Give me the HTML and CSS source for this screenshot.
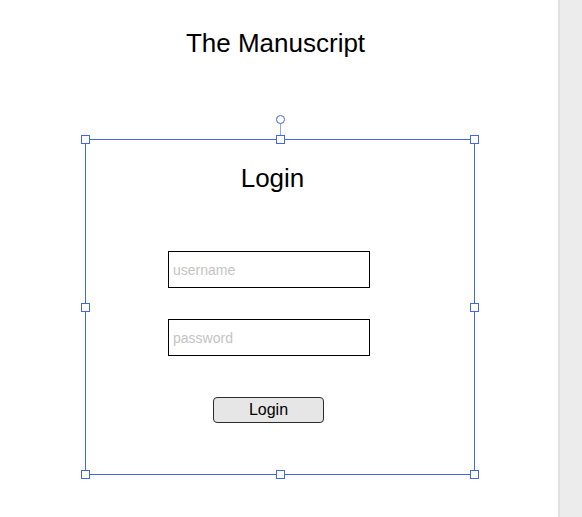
FILE: index.html
```html
<!DOCTYPE html>
<html lang="en">
<head>
<meta charset="utf-8">
<title>The Manuscript</title>
<link rel="stylesheet" href="styles.css">
</head>
<body>
<div class="page">
  <main class="canvas">
    <h1 class="title">The Manuscript</h1>
    <div class="frame">
      <span class="rotate-line"></span>
      <span class="rotate-knob"></span>
      <span class="handle h-tl"></span>
      <span class="handle h-tm"></span>
      <span class="handle h-tr"></span>
      <span class="handle h-ml"></span>
      <span class="handle h-mr"></span>
      <span class="handle h-bl"></span>
      <span class="handle h-bm"></span>
      <span class="handle h-br"></span>
      <form class="login" onsubmit="return false">
        <h2 class="login-title">Login</h2>
        <input class="field field-user" type="text" placeholder="username">
        <input class="field field-pass" type="password" placeholder="password">
        <button class="login-btn" type="button">Login</button>
      </form>
    </div>
  </main>
  <aside class="side"></aside>
</div>
</body>
</html>
```

FILE: styles.css
```css
html, body {
  margin: 0;
  padding: 0;
  background: #ffffff;
}

body {
  font-family: "Liberation Sans", Arial, sans-serif;
  color: #000;
}

.page {
  display: flex;
  width: 582px;
  height: 517px;
  overflow: hidden;
}

.canvas {
  flex: 1;
  display: flex;
  flex-direction: column;
  padding-top: 28px;
}

.title {
  margin: 0;
  font-size: 26px;
  font-weight: normal;
  line-height: 30px;
  text-align: center;
  padding-right: 7px;
}

.frame {
  position: relative;
  box-sizing: border-box;
  margin: 81px 0 0 85px;
  width: 390px;
  height: 336px;
  border: 1px solid #4169e1;
}

.handle {
  position: absolute;
  box-sizing: border-box;
  width: 9px;
  height: 9px;
  background: #fff;
  border: 1px solid #4169e1;
}

.h-tl { left: -5px; top: -5px; }
.h-tm { left: 50%; margin-left: -4px; top: -5px; }
.h-tr { right: -5px; top: -5px; }
.h-ml { left: -5px; top: 50%; margin-top: -4px; }
.h-mr { right: -5px; top: 50%; margin-top: -4px; }
.h-bl { left: -5px; bottom: -5px; }
.h-bm { left: 50%; margin-left: -4px; bottom: -5px; }
.h-br { right: -5px; bottom: -5px; }

.rotate-knob {
  position: absolute;
  box-sizing: border-box;
  width: 9px;
  height: 9px;
  left: 50%;
  margin-left: -4px;
  top: -25px;
  border: 1px solid #4169e1;
  border-radius: 50%;
  background: #fff;
}

.rotate-line {
  position: absolute;
  width: 1px;
  left: 50%;
  margin-left: 0;
  top: -17px;
  height: 12px;
  background: #8ea6ec;
}

.login {
  display: flex;
  flex-direction: column;
  align-items: center;
  padding: 23px 22px 0 0;
  margin: 0;
}

.login-title {
  margin: 0 0 58px;
  font-size: 26px;
  font-weight: normal;
  line-height: 30px;
  padding-left: 7px;
}

.field {
  box-sizing: border-box;
  width: 202px;
  height: 37px;
  margin: 0;
  padding: 0 4px;
  border: 1px solid #000;
  border-radius: 0;
  background: #fff;
  font-family: "Liberation Sans", Arial, sans-serif;
  font-size: 14px;
  color: #000;
  outline: none;
}

.field::placeholder {
  color: #c4c4c4;
}

.field-user {
  margin-bottom: 31px;
}

.field-pass {
  margin-bottom: 41px;
}

.login-btn {
  box-sizing: border-box;
  width: 111px;
  height: 26px;
  margin: 0 1px 0 0;
  padding: 0;
  border: 1px solid #2b2b2b;
  border-radius: 4px;
  background: #e6e6e6;
  font-family: "Liberation Sans", Arial, sans-serif;
  font-size: 16px;
  color: #000;
}

.side {
  flex: 0 0 22px;
  background: #ececec;
  border-left: 2px solid #e0e0e0;
}
```
